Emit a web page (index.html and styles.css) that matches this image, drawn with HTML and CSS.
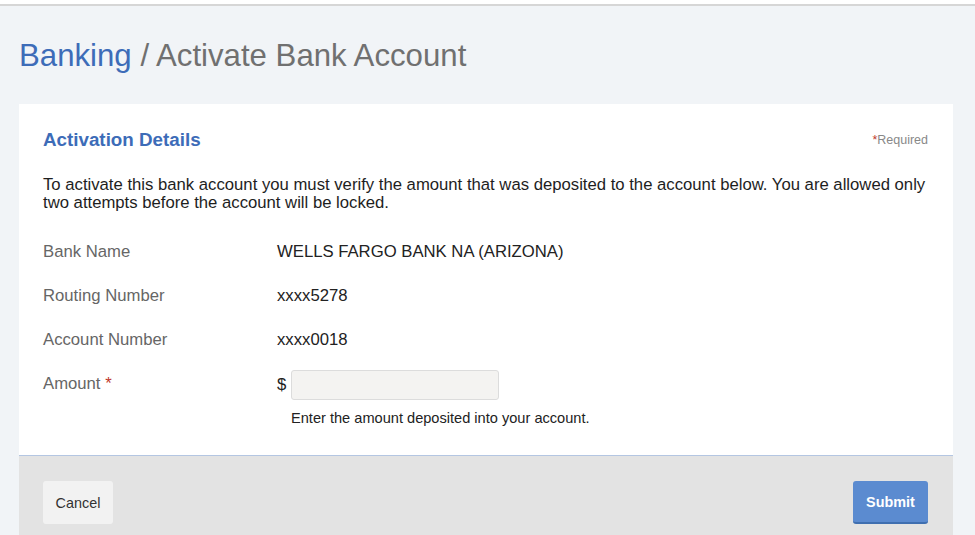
FILE: index.html
```html
<!DOCTYPE html>
<html>
<head>
<meta charset="utf-8">
<link rel="stylesheet" href="styles.css">
</head>
<body>
<div class="topbar"></div>
<main class="page">
  <h1 class="title"><span class="crumb">Banking</span> / Activate Bank Account</h1>
  <section class="card">
    <div class="card-body">
      <div class="card-head">
        <h2 class="card-title">Activation Details</h2>
        <span class="required"><span class="star">*</span>Required</span>
      </div>
      <p class="intro">To activate this bank account you must verify the amount that was deposited to the account below. You are allowed only two attempts before the account will be locked.</p>
      <div class="rows">
        <div class="row"><div class="label">Bank Name</div><div class="value">WELLS FARGO BANK NA (ARIZONA)</div></div>
        <div class="row"><div class="label">Routing Number</div><div class="value">xxxx5278</div></div>
        <div class="row"><div class="label">Account Number</div><div class="value">xxxx0018</div></div>
        <div class="row amount-row">
          <div class="label">Amount <span class="star">*</span></div>
          <div class="value">
            <div class="amount-field"><span class="dollar">$</span><input class="amount-input" type="text"></div>
            <div class="help">Enter the amount deposited into your account.</div>
          </div>
        </div>
      </div>
    </div>
    <div class="card-foot">
      <button class="btn btn-cancel">Cancel</button>
      <button class="btn btn-submit">Submit</button>
    </div>
  </section>
</main>
</body>
</html>
```

FILE: styles.css
```css
html, body {
  margin: 0;
  padding: 0;
}
body {
  background: #f1f4f7;
  font-family: "Liberation Sans", Arial, sans-serif;
  color: #222;
  height: 535px;
  overflow: hidden;
}
.topbar {
  height: 4px;
  background: #ffffff;
  border-bottom: 2px solid #d6d6d6;
}
.page {
  padding: 0 22px 0 19px;
}
.title {
  margin: 0;
  padding-top: 32px;
  box-sizing: border-box;
  font-weight: normal;
  font-size: 31.2px;
  line-height: 36px;
  color: #707070;
  height: 98px;
}
.crumb {
  color: #3d6cb8;
}
.card {
  background: #ffffff;
}
.card-body {
  padding: 24px 24px 0 24px;
  height: 351px;
  box-sizing: border-box;
}
.card-head {
  display: flex;
  justify-content: space-between;
  align-items: center;
  height: 24px;
}
.card-title {
  margin: 0;
  font-size: 18.8px;
  font-weight: bold;
  color: #3d6cb8;
}
.required {
  font-size: 12.5px;
  color: #888;
  padding-right: 1px;
}
.star {
  color: #c0392b;
}
.intro {
  margin: 24px 0 0 0;
  font-size: 16.7px;
  line-height: 18px;
  color: #1e1e1e;
}
.rows {
  margin-top: 30px;
}
.row {
  display: flex;
  height: 44px;
  align-items: flex-start;
  font-size: 16.7px;
  line-height: 20px;
}
.label {
  width: 234px;
  color: #666;
}
.value {
  color: #222;
}
.amount-row {
  height: auto;
}
.amount-field {
  display: flex;
  align-items: center;
  margin-top: -4px;
}
.dollar {
  width: 14px;
}
.amount-input {
  width: 208px;
  height: 30px;
  box-sizing: border-box;
  background: #f4f3f1;
  border: 1px solid #dcdcdc;
  border-radius: 3px;
  margin: 0;
}
.help {
  margin: 9px 0 0 14px;
  font-size: 14.6px;
  line-height: 18px;
  color: #222;
}
.card-foot {
  background: #e3e3e3;
  border-top: 1px solid #b4c6e2;
  display: flex;
  justify-content: space-between;
  padding: 25px 25px 30px 24px;
}
.btn {
  font-family: "Liberation Sans", Arial, sans-serif;
  font-size: 14.4px;
  height: 43px;
  border-radius: 3px;
  border: none;
  cursor: pointer;
}
.btn-cancel {
  background: #f2f2f2;
  color: #333;
  width: 70px;
}
.btn-submit {
  background: #5b8bd0;
  color: #fff;
  font-weight: bold;
  width: 75px;
  border-bottom: 2px solid #3f6fb0;
}
```
